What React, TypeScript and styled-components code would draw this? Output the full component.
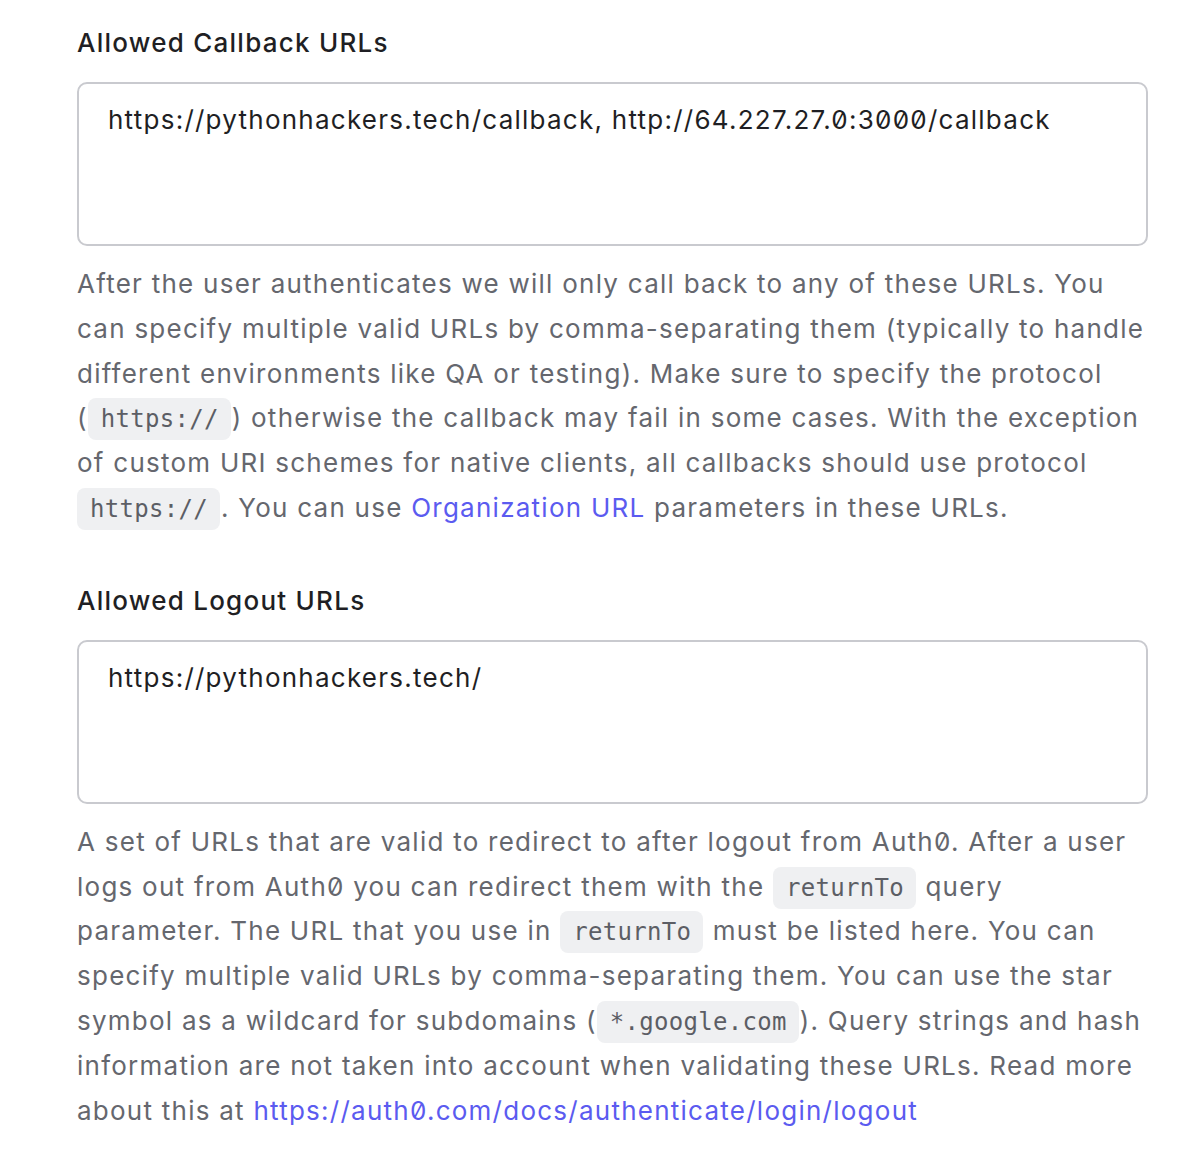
import styled, { createGlobalStyle } from "styled-components";

const GlobalStyle = createGlobalStyle`
  body {
    margin: 0;
    background: #ffffff;
    font-family: Inter, "Noto Sans", sans-serif;
    font-feature-settings: "zero";
  }
`;

const Page = styled.div`
  width: 1071px;
  padding: 20px 0 40px 77px;
  display: flex;
  flex-direction: column;
  gap: 47px;
`;

const Field = styled.section`
  display: flex;
  flex-direction: column;
`;

const Label = styled.label`
  font-size: 26px;
  line-height: 45px;
  font-weight: 500;
  letter-spacing: 1.25px;
  color: #1f1f24;
  margin-bottom: 17px;
`;

const TextArea = styled.textarea`
  box-sizing: border-box;
  width: 100%;
  height: 164px;
  border: 2px solid #c9cacf;
  border-radius: 10px;
  padding: 16px 29px;
  font-family: Inter, "Noto Sans", sans-serif;
  font-feature-settings: "zero";
  font-size: 26px;
  line-height: 39px;
  letter-spacing: 1.25px;
  color: #1f1f24;
  resize: none;
  outline: none;
  margin: 0 0 16px;
`;

const Help = styled.p`
  margin: 0;
  font-size: 26px;
  line-height: 44.8px;
  letter-spacing: 1.25px;
  color: #65676e;
`;

const Code = styled.code`
  font-family: "DejaVu Sans Mono", "Liberation Mono", monospace;
  font-size: 24px;
  line-height: 1;
  letter-spacing: 0.3px;
  background: #eff0f2;
  color: #5c5e65;
  border-radius: 8px;
  padding: 7px 12px 7px 13px;
  margin: 0 1px 0 0;
`;

const Link = styled.a`
  color: #5b5bf0;
  text-decoration: none;
`;

export default function App() {
  return (
    <>
      <GlobalStyle />
      <Page>
        <Field>
          <Label>Allowed Callback URLs</Label>
          <TextArea
            readOnly
            defaultValue="https://pythonhackers.tech/callback, http://64.227.27.0:3000/callback"
          />
          <Help>
            After the user authenticates we will only call back to any of these
            URLs. You can specify multiple valid URLs by comma-separating them
            (typically to handle different environments like QA or testing).
            Make sure to specify the protocol (<Code>https://</Code>) otherwise
            the callback may fail in some cases. With the exception of custom
            URI schemes for native clients, all callbacks should use protocol{" "}
            <Code>https://</Code>. You can use{" "}
            <Link href="#">Organization URL</Link> parameters in these URLs.
          </Help>
        </Field>
        <Field>
          <Label>Allowed Logout URLs</Label>
          <TextArea readOnly defaultValue="https://pythonhackers.tech/" />
          <Help>
            A set of URLs that are valid to redirect to after logout from Auth0.
            After a user logs out from Auth0 you can redirect them with the{" "}
            <Code>returnTo</Code> query parameter. The URL that you use in{" "}
            <Code>returnTo</Code> must be listed here. You can specify multiple
            valid URLs by comma-separating them. You can use the star symbol as
            a wildcard for subdomains (<Code>*.google.com</Code>). Query strings
            and hash information are not taken into account when validating
            these URLs. Read more about this at{" "}
            <Link href="#">https://auth0.com/docs/authenticate/login/logout</Link>
          </Help>
        </Field>
      </Page>
    </>
  );
}
